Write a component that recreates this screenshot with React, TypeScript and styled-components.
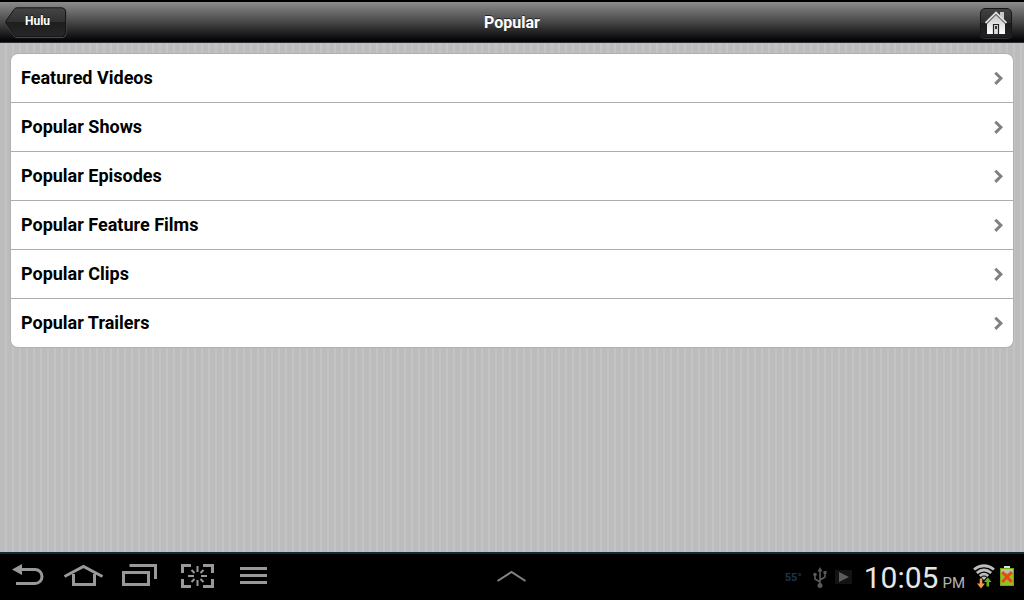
import React from "react";
import styled, { createGlobalStyle } from "styled-components";

const GlobalStyle = createGlobalStyle`
  *, *::before, *::after { box-sizing: border-box; }
  body { margin: 0; background: #000; font-family: Roboto, "Liberation Sans", sans-serif; }
`;

const Screen = styled.div`
  display: flex;
  flex-direction: column;
  min-height: 100vh;
  background: #000;
`;

const Header = styled.header`
  display: grid;
  grid-template-columns: 1fr auto 1fr;
  align-items: center;
  height: 41px;
  margin-top: 2px;
  padding: 0 5px;
  background: linear-gradient(#8c8c8c, #474747 50%, #050505 96%);
  border-bottom: 1px solid #2b2b33;
`;

const Title = styled.h1`
  margin: 0;
  padding-top: 2px;
  color: #fff;
  font-size: 16px;
  line-height: 20px;
  font-weight: 700;
  text-shadow: 0 -1px 0 rgba(0, 0, 0, 0.6);
`;

const BackButton = styled.button`
  display: grid;
  justify-self: start;
  width: 62px;
  height: 31px;
  padding: 0;
  border: 0;
  background: none;
  color: #fff;
  font: 700 12px/28px Roboto, "Liberation Sans", sans-serif;
  text-shadow: 0 -1px 0 rgba(0, 0, 0, 0.6);
  cursor: pointer;

  > * { grid-area: 1 / 1; }
`;

const BackLabel = styled.span`
  padding-left: 3px;
  z-index: 1;
`;

const HomeButton = styled.button`
  display: flex;
  align-items: center;
  justify-content: center;
  justify-self: end;
  width: 32px;
  height: 30px;
  margin: 2px 7px 0 0;
  padding: 0;
  border: 1px solid #161616;
  border-radius: 5px;
  background: linear-gradient(#424242, #2c2c2c 50%, #1c1c1c 50%, #232323);
  box-shadow: 0 1px 0 rgba(255, 255, 255, 0.16);
  cursor: pointer;
`;

const Content = styled.main`
  flex: 1;
  padding: 10px 10px 20px;
  background: repeating-linear-gradient(90deg, #bcbcbc 0 5px, #c3c3c3 5px 7px);
`;

const List = styled.ul`
  margin: 0;
  padding: 0;
  list-style: none;
  overflow: hidden;
  border: 1px solid #b0b0b0;
  border-radius: 8px;
  background: #fff;
`;

const Item = styled.li`
  & + & { border-top: 1px solid #adadad; }
`;

const ItemLink = styled.a`
  display: flex;
  align-items: center;
  justify-content: space-between;
  height: 48px;
  padding: 0 10px;
  color: #000;
  font-size: 18px;
  line-height: 24px;
  font-weight: 700;
  text-decoration: none;
`;

const SystemBar = styled.footer`
  display: grid;
  grid-template-columns: 1fr auto 1fr;
  align-items: center;
  height: 48px;
  padding: 0 10px 0 8px;
  border-top: 2px solid #122b3a;
  background: #000;
`;

const NavKeys = styled.nav`
  display: flex;
  gap: 12px;
`;

const KeyButton = styled.button`
  display: flex;
  align-items: center;
  justify-content: center;
  width: 44px;
  height: 44px;
  padding: 0;
  border: 0;
  background: none;
  cursor: pointer;
`;

const Status = styled.div`
  display: flex;
  align-items: center;
  justify-content: flex-end;
`;

const Temperature = styled.span`
  margin-right: 10px;
  padding-top: 2px;
  color: #1d3547;
  font-size: 11px;
  line-height: 16px;
  font-weight: 700;
`;

const Notices = styled.div`
  display: flex;
  align-items: center;
  gap: 7px;
  margin-right: 12px;
`;

const Clock = styled.time`
  display: flex;
  align-items: baseline;
  gap: 4px;
  margin-right: 8px;
  padding-top: 2px;
  color: #e6e6e6;
  font-size: 30px;
  line-height: 36px;
`;

const Meridiem = styled.span`
  color: #b4b4b4;
  font-size: 15px;
  line-height: 16px;
`;

const Indicators = styled.div`
  display: flex;
  align-items: center;
  gap: 5px;
`;

const BackShape = () => (
  <svg width="62" height="31" viewBox="0 0 62 31" aria-hidden="true">
    <defs>
      <linearGradient id="back" x1="0" y1="0" x2="0" y2="1">
        <stop offset="0" stopColor="#454545" />
        <stop offset=".5" stopColor="#303030" />
        <stop offset=".5" stopColor="#1e1e1e" />
        <stop offset="1" stopColor="#262626" />
      </linearGradient>
    </defs>
    <path d="M12 1.5H57Q61 1.5 61 5.500V26Q61 30.500 57 30.500H12Q10 30.500 9 29L1 17" fill="none" stroke="#4c4c4c" />
    <path d="M12 .8H56Q60.500 .8 60.500 5V25Q60.500 29.500 56 29.500H12Q10 29.500 9 28L1 16Q.5 15 1 14L9 2.500Q10 .8 12 .8Z" fill="url(#back)" stroke="#151515" />
  </svg>
);

const HouseIcon = () => (
  <svg width="24" height="24" viewBox="0 1 24 24" aria-hidden="true">
    <defs>
      <linearGradient id="house" x1="0" y1="0" x2="0" y2="1">
        <stop offset="0" stopColor="#c4c4c4" />
        <stop offset="1" stopColor="#fff" />
      </linearGradient>
    </defs>
    <path d="M16 2h4v8h-4z" fill="#c8c8c8" />
    <path d="M12 4L21 13V24H3V13Z" fill="url(#house)" />
    <path d="M1.500 13L12 2.500L22.500 13" fill="none" stroke="#dcdcdc" strokeWidth="1.800" />
    <path d="M2.500 14L12 4.500L21.500 14" fill="none" stroke="#3c3c3c" strokeWidth=".9" />
    <path d="M9.500 24V14.500H14.500V24" fill="#ddd" stroke="#222" strokeWidth="1.200" />
    <path d="M11 16h2v3h-2z" fill="#333" />
  </svg>
);

const Chevron = () => (
  <svg width="9" height="14" viewBox="0 0 9 14" aria-hidden="true">
    <path d="M1.300 1.700L6.900 7.300L1.300 12.900" fill="none" stroke="#808080" strokeWidth="3" />
  </svg>
);

const KeyIcon = ({ children }: { children: React.ReactNode }) => (
  <svg width="40" height="30" viewBox="0 0 40 30" fill="none" stroke="#999" strokeWidth="3" overflow="visible" aria-hidden="true">
    {children}
  </svg>
);

const UsbIcon = () => (
  <svg width="16" height="24" viewBox="0 0 16 24" fill="none" stroke="#5a5a5a" strokeWidth="1.600" aria-hidden="true">
    <path d="M8 5V20M8 17L3 14V10M8 15L13 12V8" />
    <path d="M8 2L10.500 6.500H5.500ZM11.500 6h3v3h-3z" fill="#5a5a5a" stroke="none" />
    <circle cx="3" cy="9.500" r="1.800" fill="#5a5a5a" stroke="none" />
    <circle cx="8" cy="20.500" r="2.500" fill="#5a5a5a" stroke="none" />
  </svg>
);

const PlayIcon = () => (
  <svg width="17" height="17" viewBox="0 0 17 17" aria-hidden="true">
    <path d="M0 1h17v14H0z" fill="#131313" />
    <path d="M4 3L14 8L4 13Z" fill="#5c5c5c" />
  </svg>
);

const WifiIcon = () => (
  <svg width="22" height="26" viewBox="0 0 22 26" fill="none" aria-hidden="true">
    <g stroke="#bdbdbd" strokeWidth="2.700">
      <path d="M1 5.500Q11 -2 21 5.500" />
      <path d="M3.800 9Q11 3 18.200 9" />
      <path d="M6.800 12Q11 8.300 15.200 12" />
    </g>
    <path d="M8.500 13.500Q11 11.500 13.500 13.500L11 16Z" fill="#bdbdbd" />
    <path d="M6.700 14.500h2.600v5H12L8 24.500L4 19.500H6.700Z" fill="#f2994a" />
    <path d="M13.500 22.500V18H11L14.800 13.500L18.600 18H16.100V22.500Z" fill="#69b519" />
  </svg>
);

const BatteryIcon = () => (
  <svg width="14" height="22" viewBox="0 0 14 22" aria-hidden="true">
    <path d="M4 0h6v3H4z" fill="#ddd" />
    <path d="M0 2h14v18H0z" fill="#79a619" />
    <path d="M1 3h12v4H1z" fill="#b5c49a" />
    <path d="M1 7h12v12H1z" fill="#8fc31f" />
    <path d="M2.200 6L11.800 16M11.800 6L2.200 16" stroke="#e8481c" strokeWidth="3" />
  </svg>
);

const categories = [
  "Featured Videos",
  "Popular Shows",
  "Popular Episodes",
  "Popular Feature Films",
  "Popular Clips",
  "Popular Trailers",
];

export default function App() {
  return (
    <Screen>
      <GlobalStyle />
      <Header>
        <BackButton type="button">
          <BackShape />
          <BackLabel>Hulu</BackLabel>
        </BackButton>
        <Title>Popular</Title>
        <HomeButton type="button" aria-label="Home">
          <HouseIcon />
        </HomeButton>
      </Header>
      <Content>
        <List>
          {categories.map((name) => (
            <Item key={name}>
              <ItemLink href="#">
                {name}
                <Chevron />
              </ItemLink>
            </Item>
          ))}
        </List>
      </Content>
      <SystemBar>
        <NavKeys aria-label="System">
          <KeyButton type="button" aria-label="Back">
            <KeyIcon>
              <path d="M10 7.500H25A7 7 0 0 1 25 21.500H6" />
              <path d="M2 7.500L12 2V13Z" fill="#999" stroke="none" />
            </KeyIcon>
          </KeyButton>
          <KeyButton type="button" aria-label="Home screen">
            <KeyIcon>
              <path d="M-1.500 14.500L17.500 4.500L36.500 14.500" />
              <path d="M7.500 12V22.500H28.500V12" />
            </KeyIcon>
          </KeyButton>
          <KeyButton type="button" aria-label="Recent apps">
            <KeyIcon>
              <path d="M1.500 10.500H26.500V22.500H1.500Z" />
              <path d="M7.500 3.500H33.500V17" />
            </KeyIcon>
          </KeyButton>
          <KeyButton type="button" aria-label="Screenshot">
            <KeyIcon>
              <path d="M4.500 11V3.500H13M25 3.500H34.500V11M34.500 17V24.500H25M13 24.500H4.500V17" />
              <path d="M19.500 4V10M19.500 18V24M10 14H16M23 14H29M13.500 8L16.500 11M25.500 8L22.500 11M13.500 20L16.500 17M25.500 20L22.500 17" strokeWidth="2" />
            </KeyIcon>
          </KeyButton>
          <KeyButton type="button" aria-label="Menu">
            <KeyIcon>
              <path d="M6 6.500H33M6 13.500H33M6 20.500H33" />
            </KeyIcon>
          </KeyButton>
        </NavKeys>
        <KeyButton type="button" aria-label="Show tray">
          <KeyIcon>
            <path d="M6.500 19L20.500 10L34.500 19" stroke="#848484" strokeWidth="2" />
          </KeyIcon>
        </KeyButton>
        <Status>
          <Temperature>55°</Temperature>
          <Notices>
            <UsbIcon />
            <PlayIcon />
          </Notices>
          <Clock dateTime="22:05">
            10:05
            <Meridiem>PM</Meridiem>
          </Clock>
          <Indicators>
            <WifiIcon />
            <BatteryIcon />
          </Indicators>
        </Status>
      </SystemBar>
    </Screen>
  );
}
